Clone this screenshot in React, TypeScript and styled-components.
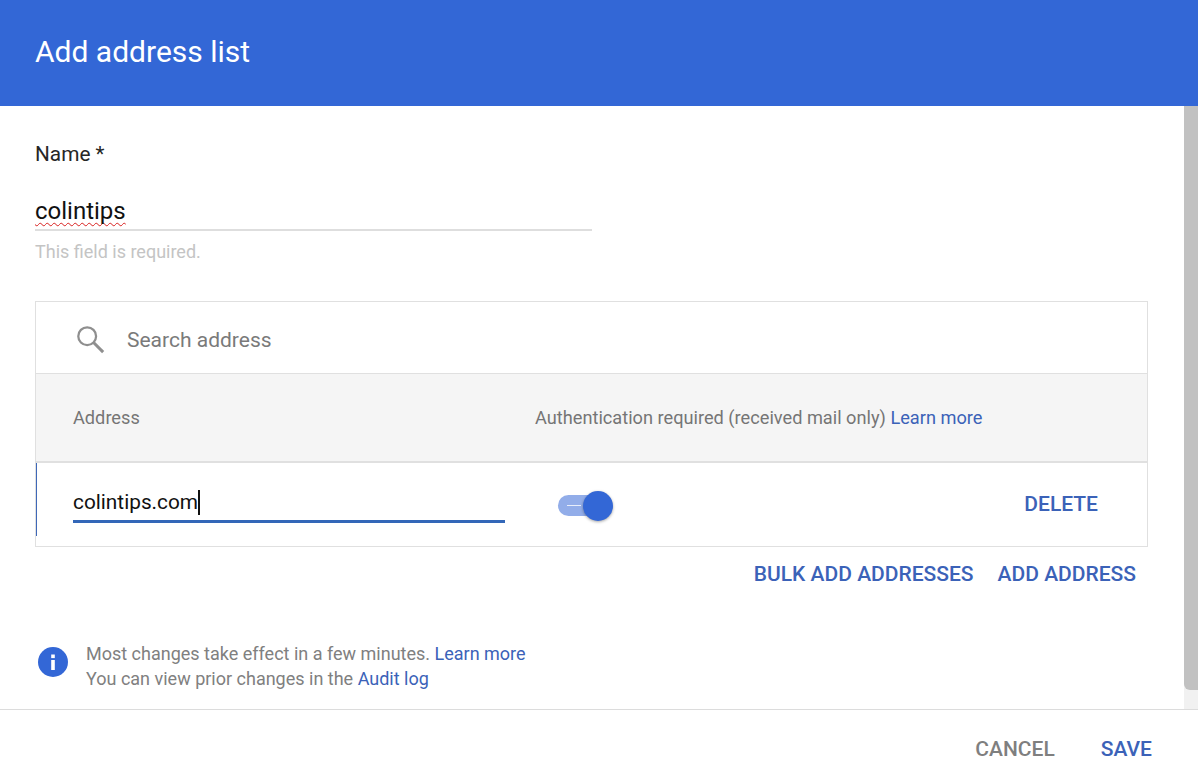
import React from "react";
import styled, { createGlobalStyle } from "styled-components";

const Global = createGlobalStyle`
  html, body { margin: 0; padding: 0; background: #fff; }
  body { font-family: Roboto, "Liberation Sans", sans-serif; }
`;
const Page = styled.div`
  width: 1198px; height: 782px; display: flex; flex-direction: column; overflow: hidden; background: #fff;
`;
const Header = styled.header`
  height: 106px; flex: none; background: #3367d6; display: flex; align-items: center; padding: 0 0 4px 35px; box-sizing: border-box;
`;
const Title = styled.h1`
  margin: 0; font-size: 30px; font-weight: 400; color: #fff;
`;
const Body = styled.div`
  height: 604px; flex: none; display: flex; border-bottom: 1px solid #dcdcdc; box-sizing: border-box;
`;
const Content = styled.main`
  flex: 1; padding: 36px 36px 0 35px; min-width: 0;
`;
const Track = styled.div`
  width: 14px; background: #f1f1f1; flex: none;
`;
const Thumb = styled.div`
  height: 584px; background: #c1c1c1; border-radius: 0 0 0 6px;
`;
const NameLabel = styled.label`
  display: block; font-size: 20.8px; line-height: 24px; color: #262626;
`;
const NameField = styled.div`
  margin-top: 31px; width: 557px; height: 34px; box-sizing: border-box; border-bottom: 2px solid #dedede;
  font-size: 24px; line-height: 28px; color: #111;
`;
const Misspelt = styled.span`
  text-decoration: underline wavy #d8201f 1.3px; text-underline-offset: 3px; text-decoration-skip-ink: none;
`;
const Hint = styled.div`
  margin-top: 10px; font-size: 18px; line-height: 22px; color: #c4c4c4;
`;
const Card = styled.section`
  margin-top: 38px; border: 1px solid #e0e0e0; width: 1113px; box-sizing: border-box;
`;
const SearchRow = styled.div`
  height: 72px; display: flex; align-items: center; padding: 4px 0 0 39px; gap: 22px; border-bottom: 1px solid #e0e0e0; box-sizing: border-box;
`;
const SearchIcon = styled.svg`
  position: relative; top: -1px; flex: none;
`;
const SearchText = styled.span`
  font-size: 21px; color: #7a7a7a;
`;
const HeadRow = styled.div`
  height: 87px; display: flex; align-items: center; background: #f5f5f5; border-bottom: 2px solid #e0e0e0; box-sizing: content-box;
  font-size: 18.2px; color: #757575;
`;
const HeadAddress = styled.div`
  width: 499px; padding-left: 37px; box-sizing: border-box; flex: none;
`;
const Link = styled.a`
  color: #3b62b8; text-decoration: none;
`;
const DataRow = styled.div`
  height: 83px; display: flex; align-items: center; position: relative; box-sizing: border-box;
`;
const Accent = styled.span`
  position: absolute; left: 0; top: 0; height: 73px; width: 1px; background: #3f68b8;
`;
const AddressCell = styled.div`
  width: 432px; margin-left: 37px; flex: none; align-self: flex-start; height: 60px; box-sizing: border-box; border-bottom: 3px solid #3367b8;
  font-size: 20.8px; line-height: 26px; color: #111; padding-bottom: 5px;
  display: flex; align-items: flex-end;
`;
const Caret = styled.span`
  width: 1.5px; height: 25px; background: #111; display: inline-block;
`;
const ToggleCell = styled.div`
  margin-left: 53px; flex: none; display: flex; align-items: center;
`;
const ToggleTrack = styled.div`
  width: 40px; height: 21px; border-radius: 11px; background: #92ade9; display: flex; align-items: center; padding-left: 9px; box-sizing: border-box; position: relative; top: 1px;
`;
const ToggleDash = styled.span`
  width: 14px; height: 1px; background: #e8eefb;
`;
const Knob = styled.div`
  width: 30px; height: 30px; border-radius: 50%; background: #3367d6; margin-left: -15px; position: relative; top: 1px;
  box-shadow: 0 1px 3px rgba(0,0,0,.35);
`;
const TextButton = styled.button<{ $muted?: boolean }>`
  border: 0; background: none; padding: 0; font-family: inherit; font-size: 21px; font-weight: 500;
  color: ${p => p.$muted ? "#7f7f7f" : "#3b62b8"};
`;
const DeleteCell = styled.div`
  margin-left: auto; margin-right: 49px; padding-bottom: 2px;
`;
const Actions = styled.div`
  display: flex; justify-content: flex-end; gap: 24px; width: 1101px; margin-top: 14px; height: 26px; align-items: center;
`;
const Notice = styled.div`
  margin-top: 54px; display: flex; align-items: flex-start; gap: 17px;
`;
const NoticeText = styled.div`
  font-size: 18px; line-height: 25px; color: #808080;
`;
const IconWrap = styled.div`
  padding: 5px 0 1px 2px; line-height: 0;
`;
const Footer = styled.footer`
  flex: 1; display: flex; justify-content: flex-end; align-items: center; gap: 46px; padding: 6px 46px 0 0;
`;

export default function App() {
  return (
    <Page>
      <Global />
      <Header><Title>Add address list</Title></Header>
      <Body>
        <Content>
          <NameLabel>Name *</NameLabel>
          <NameField><Misspelt>colintips</Misspelt></NameField>
          <Hint>This field is required.</Hint>
          <Card>
            <SearchRow>
              <SearchIcon width="30" height="30" viewBox="0 0 32 32" fill="none" stroke="#8f8f8f">
                <circle cx="13" cy="13" r="9.5" strokeWidth="2.4" />
                <path d="M19.5 19.5 L30 30" strokeWidth="3.2" />
              </SearchIcon>
              <SearchText>Search address</SearchText>
            </SearchRow>
            <HeadRow>
              <HeadAddress>Address</HeadAddress>
              <span>Authentication required (received mail only) <Link>Learn more</Link></span>
            </HeadRow>
            <DataRow>
              <Accent />
              <AddressCell>colintips.com<Caret /></AddressCell>
              <ToggleCell>
                <ToggleTrack><ToggleDash /></ToggleTrack>
                <Knob />
              </ToggleCell>
              <DeleteCell><TextButton>DELETE</TextButton></DeleteCell>
            </DataRow>
          </Card>
          <Actions>
            <TextButton>BULK ADD ADDRESSES</TextButton>
            <TextButton>ADD ADDRESS</TextButton>
          </Actions>
          <Notice>
            <IconWrap>
              <svg width="32" height="32" viewBox="0 0 32 32">
                <circle cx="16" cy="16" r="15" fill="#3367d6" />
                <rect x="14.2" y="14" width="3.6" height="10" fill="#fff" />
                <rect x="14.2" y="8.5" width="3.6" height="3.6" fill="#fff" />
              </svg>
            </IconWrap>
            <NoticeText>
              Most changes take effect in a few minutes. <Link>Learn more</Link><br />
              You can view prior changes in the <Link>Audit log</Link>
            </NoticeText>
          </Notice>
        </Content>
        <Track><Thumb /></Track>
      </Body>
      <Footer>
        <TextButton $muted>CANCEL</TextButton>
        <TextButton>SAVE</TextButton>
      </Footer>
    </Page>
  );
}
